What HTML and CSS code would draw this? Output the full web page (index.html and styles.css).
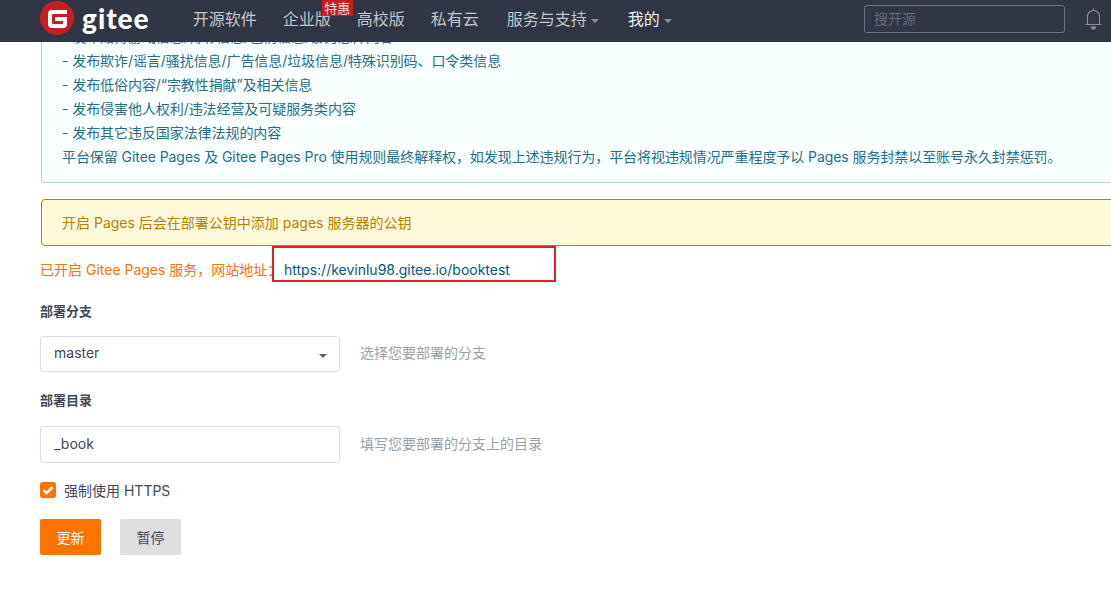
FILE: index.html
```html
<!DOCTYPE html>
<html lang="en">
  <head>
    <meta charset="UTF-8" />
    <meta name="viewport" content="width=device-width, initial-scale=1.0" />
    <title>Gitee Pages</title>
    <link rel="stylesheet" href="styles.css">
  </head>
  <body>
    <div class="header">
      <a class="logo">
        <svg class="logo-mark" viewBox="0 0 34 34" width="34" height="34">
          <circle cx="17" cy="17" r="17" fill="#c71d23" />
          <path d="M8 13a4 4 0 0 1 4-4h15v4H13a1 1 0 0 0-1 1v8a1 1 0 0 0 1 1h9a1 1 0 0 0 1-1v-2h-8v-4h12v7a4 4 0 0 1-4 4H12a4 4 0 0 1-4-4z" fill="#fff" />
        </svg>
        <span class="logo-text">gitee</span>
      </a>
      <ul class="nav">
        <li>开源软件</li>
        <li class="has-badge">企业版<span class="badge">特惠</span></li>
        <li>高校版</li>
        <li>私有云</li>
        <li class="caret service">服务与支持</li>
        <li class="caret mine">我的</li>
      </ul>
      <div class="search">搜开源</div>
      <svg class="bell" viewBox="0 0 17 22" width="17" height="22">
        <path d="M2.500 16V8.500a6 6 0 0 1 12 0V16M.5 16.500h16" fill="none" stroke="#8b8f9a" stroke-width="1.100" />
        <path d="M8.500 .5v2" fill="none" stroke="#8b8f9a" stroke-width="1.500" />
        <path d="M5.500 18.500h6l-1.500 3h-3z" fill="#8b8f9a" />
      </svg>
    </div>

    <div class="container">
      <div class="message info">
        <p>- 发布赌博游戏信息/博彩信息/色情信息/暴力恐怖内容</p>
        <p>- 发布欺诈/谣言/骚扰信息/广告信息/垃圾信息/特殊识别码、口令类信息</p>
        <p>- 发布低俗内容/“宗教性捐献”及相关信息</p>
        <p>- 发布侵害他人权利/违法经营及可疑服务类内容</p>
        <p>- 发布其它违反国家法律法规的内容</p>
        <p>平台保留 Gitee Pages 及 Gitee Pages Pro 使用规则最终解释权，如发现上述违规行为，平台将视违规情况严重程度予以 Pages 服务封禁以至账号永久封禁惩罚。</p>
      </div>

      <div class="message warning">开启 Pages 后会在部署公钥中添加 pages 服务器的公钥</div>

      <div class="status">
        <span>已开启 Gitee Pages 服务，网站地址：</span>
        <a class="site-link">https://kevinlu98.gitee.io/booktest</a>
      </div>

      <label class="field-label branch-label">部署分支</label>
      <div class="field">
        <div class="input select">master</div>
        <span class="hint">选择您要部署的分支</span>
      </div>

      <label class="field-label dir-label">部署目录</label>
      <div class="field dir-field">
        <div class="input">_book</div>
        <span class="hint">填写您要部署的分支上的目录</span>
      </div>

      <div class="check">
        <svg class="check-box" viewBox="0 0 16 16" width="16" height="16">
          <rect width="16" height="16" rx="2.500" fill="#fe7300" />
          <path d="M3.500 8.200l3 3L12.500 5" fill="none" stroke="#fff" stroke-width="2.600" />
        </svg>
        <span>强制使用 HTTPS</span>
      </div>

      <div class="buttons">
        <button class="btn primary">更新</button>
        <button class="btn">暂停</button>
      </div>
    </div>
  </body>
</html>
```

FILE: styles.css
```css
html,
body {
  height: 100%;
  overflow: hidden;
}
body {
  margin: 0;
  padding: 0;
  font-family: "Inter", "Noto Sans CJK SC", sans-serif;
  font-size: 14px;
  color: #40485b;
  background-color: #fff;
}

/* top bar sits over the scrolled page */
.header {
  position: fixed;
  top: 0;
  left: 0;
  right: 0;
  height: 42px;
  box-sizing: border-box;
  z-index: 2;
  display: flex;
  align-items: center;
  padding: 0 9px 4px 40px;
  background-color: #303643;
}
.logo {
  display: flex;
  align-items: center;
  gap: 8px;
  margin-top: -2px;
}
.logo-text {
  font-family: "Lato", sans-serif;
  font-size: 28px;
  font-weight: 900;
  line-height: 30px;
  color: #fff;
  letter-spacing: 1px;
}
.nav {
  display: flex;
  gap: 26px;
  list-style: none;
  margin: 0 0 0 43px;
  padding: 0;
  font-size: 16px;
  line-height: 20px;
  color: #c3c5ca;
}
.nav .service {
  margin-left: 2px;
}
.nav .mine {
  margin-left: 3px;
  color: #eceded;
}
.has-badge {
  position: relative;
}
.badge {
  position: absolute;
  top: -9px;
  left: 39px;
  width: 31px;
  height: 16px;
  border-radius: 1px;
  background-color: #c71d23;
  color: #f4dcdc;
  font-size: 13px;
  line-height: 16px;
  text-align: center;
}
.caret::after {
  content: "";
  display: inline-block;
  margin-left: 4px;
  vertical-align: middle;
  border-top: 4px solid #8f929b;
  border-left: 4px solid transparent;
  border-right: 4px solid transparent;
}
.search {
  box-sizing: border-box;
  width: 201px;
  height: 28px;
  margin-left: auto;
  margin-right: 20px;
  padding-left: 9px;
  border: 1px solid #6f7482;
  border-radius: 3px;
  font-size: 14px;
  line-height: 26px;
  color: #666b79;
}

.container {
  width: 1100px;
  padding: 25px 0 0 40px;
}
.message {
  box-sizing: border-box;
  margin-left: 1px;
}
.info {
  height: 158px;
  padding-left: 20px;
  background-color: #f8ffff;
  border: 1px solid #a9d5de;
  border-top: 0;
  border-radius: 0 0 4px 4px;
  color: #276f86;
  line-height: 24px;
  letter-spacing: -0.07px;
}
.info p {
  margin: 0;
}
.warning {
  height: 47px;
  margin-top: 16px;
  padding-left: 20px;
  background-color: #fff8db;
  border: 1px solid #b58105;
  border-radius: 4px;
  color: #b58105;
  line-height: 45px;
}
.status {
  display: flex;
  align-items: flex-start;
  height: 35px;
  color: #fe7300;
  line-height: 48px;
}
.status span {
  width: 232px;
  white-space: nowrap;
}
.site-link {
  box-sizing: border-box;
  width: 284px;
  height: 36px;
  padding-left: 10px;
  border: 2px solid #e01f26;
  color: #005980;
  line-height: 44px;
}
.field-label {
  display: block;
  font-weight: 700;
  font-size: 13px;
  color: #40485b;
  line-height: 20px;
}
.branch-label {
  margin-top: 20px;
}
.dir-label {
  margin-top: 18px;
}
.field {
  display: flex;
  align-items: center;
  gap: 20px;
  margin-top: 15px;
}
.dir-field {
  margin-top: 16px;
}
.input {
  box-sizing: border-box;
  width: 300px;
  height: 36px;
  padding-left: 13px;
  background-color: #fff;
  border: 1px solid #dcdfe8;
  border-radius: 3px;
  line-height: 32px;
  position: relative;
}
.dir-field .input {
  height: 37px;
  line-height: 33px;
}
.select::after {
  content: "";
  position: absolute;
  top: 17px;
  right: 12px;
  border-top: 4px solid #5c6270;
  border-left: 4px solid transparent;
  border-right: 4px solid transparent;
}
.hint {
  padding-bottom: 4px;
  color: #9a9fac;
}
.check {
  display: flex;
  align-items: center;
  gap: 8px;
  margin-top: 18px;
  height: 18px;
}
.buttons {
  display: flex;
  gap: 19px;
  margin-top: 20px;
}
.btn {
  width: 61px;
  height: 36px;
  padding: 0;
  border: none;
  border-radius: 2px;
  background-color: #dfdfdf;
  color: #40485b;
  font-family: inherit;
  font-size: 14px;
}
.btn.primary {
  background-color: #fe7300;
  color: #fff;
}
```
